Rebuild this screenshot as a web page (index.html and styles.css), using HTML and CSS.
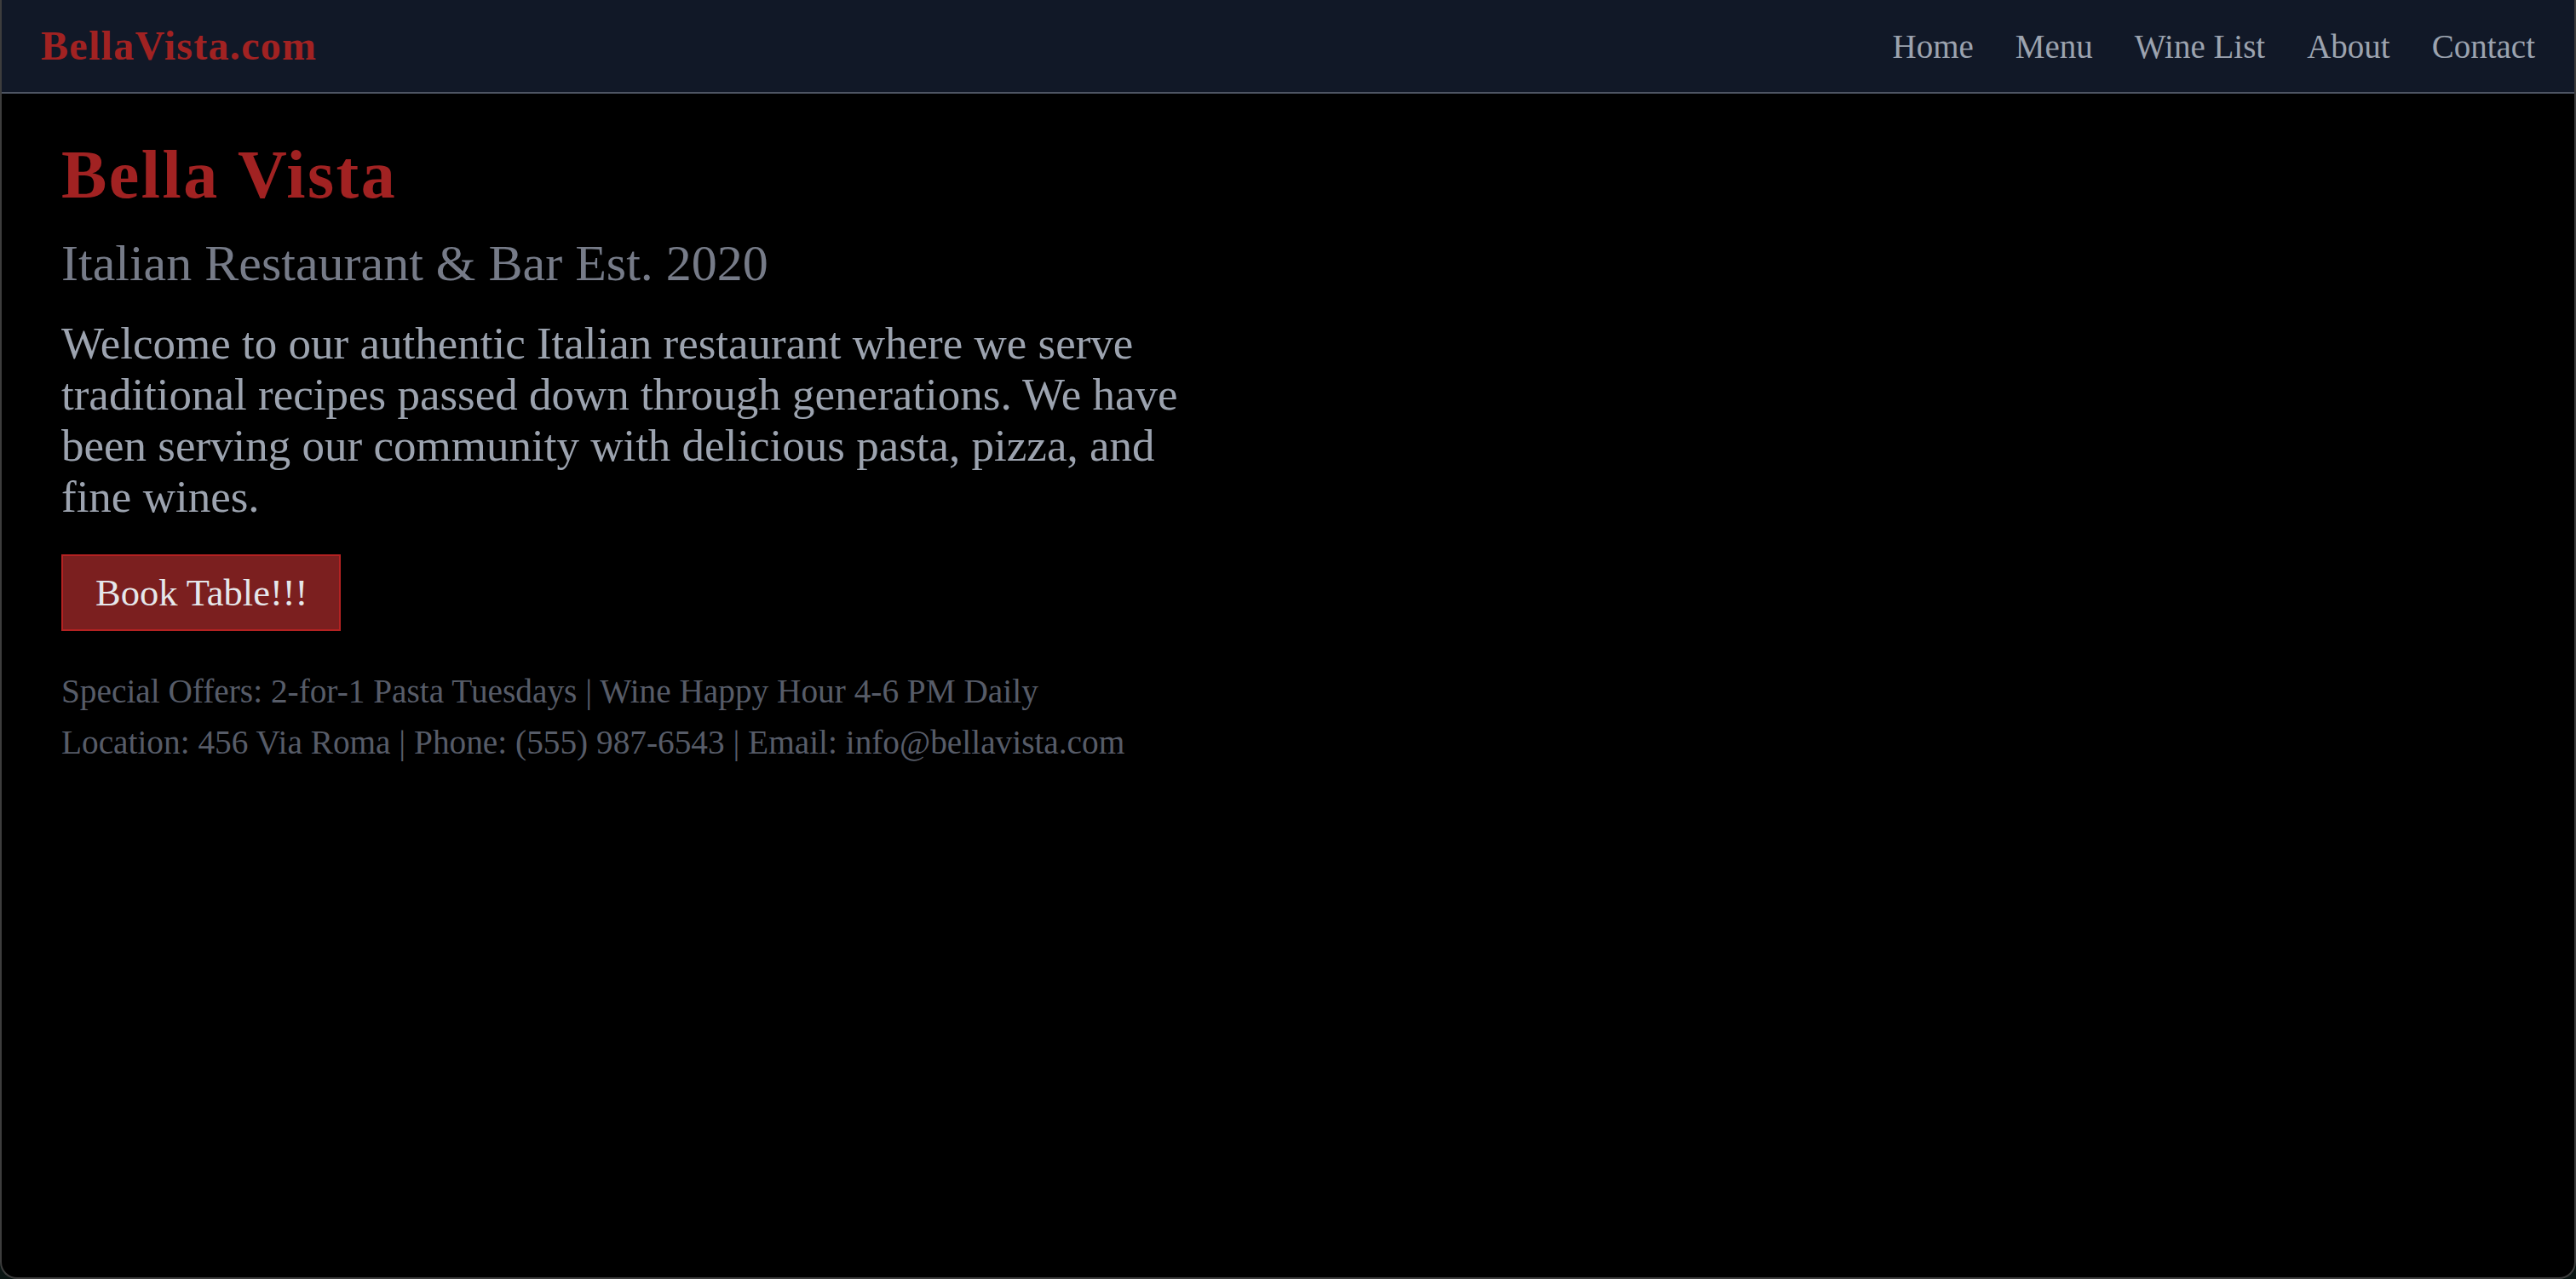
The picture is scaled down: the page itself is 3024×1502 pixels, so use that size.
FILE: index.html
```html
<!DOCTYPE html>
<html lang="en">
<head>
<meta charset="utf-8">
<title>Bella Vista</title>
<link rel="stylesheet" href="styles.css">
</head>
<body>
<div class="window">
  <header class="topbar">
    <a class="logo" href="#">BellaVista.com</a>
    <nav class="nav">
      <a href="#">Home</a>
      <a href="#">Menu</a>
      <a href="#">Wine List</a>
      <a href="#">About</a>
      <a href="#">Contact</a>
    </nav>
  </header>
  <main class="hero">
    <h1 class="title">Bella Vista</h1>
    <h2 class="subtitle">Italian Restaurant &amp; Bar Est. 2020</h2>
    <p class="intro">Welcome to our authentic Italian restaurant where we serve traditional recipes passed down through generations. We have been serving our community with delicious pasta, pizza, and fine wines.</p>
    <button class="book">Book Table!!!</button>
    <div class="info">
      <p>Special Offers: 2-for-1 Pasta Tuesdays | Wine Happy Hour 4-6 PM Daily</p>
      <p>Location: 456 Via Roma | Phone: (555) 987-6543 | Email: info@bellavista.com</p>
    </div>
  </main>
</div>
</body>
</html>
```

FILE: styles.css
```css
html, body {
  margin: 0;
  padding: 0;
  background: #0a1513;
}

body {
  font-family: "Liberation Serif", "Times New Roman", serif;
}

.window {
  box-sizing: border-box;
  width: 3024px;
  height: 1502px;
  background: #000;
  border: 2px solid rgba(255, 255, 255, 0.24);
  border-top: none;
  border-radius: 0 0 20px 20px;
  overflow: hidden;
}

.topbar {
  box-sizing: border-box;
  height: 110px;
  background: #111827;
  border-bottom: 2px solid #4e5563;
  display: flex;
  align-items: center;
  justify-content: space-between;
  padding: 0 46px 0 46px;
}

.logo {
  color: #a12222;
  font-weight: bold;
  font-size: 48px;
  letter-spacing: 1.3px;
  line-height: 1;
  text-decoration: none;
}

.nav {
  display: flex;
  gap: 49px;
}

.nav a {
  color: #9ca3af;
  font-size: 39px;
  line-height: 1;
  text-decoration: none;
}

.hero {
  padding: 55px 70px;
}

.title {
  margin: 0;
  color: #a12222;
  font-size: 80px;
  font-weight: bold;
  letter-spacing: 2.5px;
  line-height: 80px;
}

.subtitle {
  margin: 29px 0 0;
  color: #767b88;
  font-size: 60px;
  font-weight: normal;
  line-height: 70px;
}

.intro {
  margin: 29px 0 0;
  max-width: 1344px;
  color: #9ca3af;
  font-size: 53px;
  line-height: 60px;
}

.book {
  display: block;
  margin: 38px 0 0;
  box-sizing: border-box;
  height: 90px;
  padding: 0 37px 0 38px;
  background: #7b1f1f;
  border: 2px solid #b42222;
  color: #e5e7eb;
  font-family: "Liberation Serif", "Times New Roman", serif;
  font-size: 44.5px;
  line-height: 50px;
}

.info {
  margin-top: 41px;
}

.info p {
  margin: 0;
  color: #575c68;
  font-size: 39.3px;
  line-height: 60px;
}
```
